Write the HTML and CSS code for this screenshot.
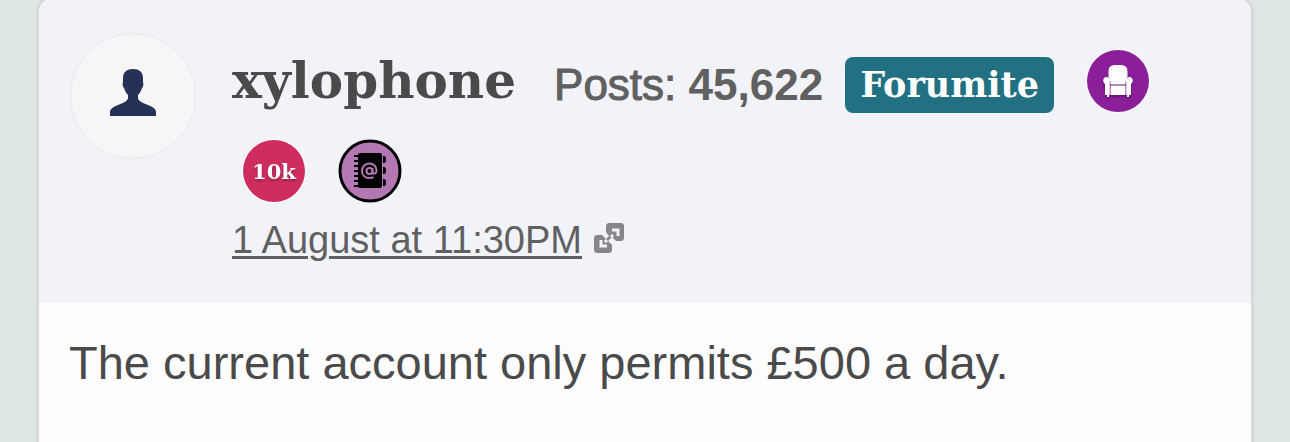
FILE: index.html
```
<!DOCTYPE html>
<html lang="en">

<head>
    <meta charset="UTF-8">
    <meta name="viewport" content="width=device-width, initial-scale=1.0">
    <title>Forum post</title>
    <link rel="stylesheet" href="styles.css">
</head>

<body>
    <article class="post">
        <header class="post-header">
            <a class="avatar" href="#profile" aria-label="xylophone's profile">
                <svg viewBox="0 0 48 48" aria-hidden="true">
                    <path d="M24 1c6 0 10 3 10 9v4c1 2 0 5-1 6-1 3-2 5-4 7v3c0 3 5 5 10 7 5 2 8 4 8 7v4H1v-4c0-3 3-5 8-7 5-2 10-4 10-7v-3c-2-2-3-4-4-7-1-1-2-4-1-6v-4c0-6 4-9 10-9z" fill="#263158"/>
                </svg>
            </a>
            <div class="details">
                <div class="author">
                    <a class="name" href="#profile">xylophone</a>
                    <span class="posts">Posts: <b>45,622</b></span>
                    <span class="rank">Forumite</span>
                    <svg class="badge" viewBox="0 0 64 64" role="img" aria-label="Armchair badge">
                        <circle cx="32" cy="32" r="32" fill="#fff"/>
                        <circle cx="32" cy="32" r="31" fill="#8a1f99"/>
                        <g class="raised" fill="#fff">
                            <path d="M22.500 28v-5c0-5 2-7 7-7h5c5 0 7 2 7 7v5c-1 1-2 3-2 7.500h-15c0-4.500-1-6.500-2-7.500z"/>
                            <path d="M24.500 36.500h15V46h-15z"/>
                            <path d="M20.500 28c3 0 4 2 3.300 5v13H19V35c-3-2-2-7 1.500-7z"/>
                            <path d="M43.500 28c-3 0-4 2-3.300 5v13H45V35c3-2 2-7-1.500-7z"/>
                            <path d="M21 46h2v2h-2zM41 46h2v2h-2z"/>
                        </g>
                    </svg>
                    <svg class="badge" viewBox="0 0 64 64" role="img" aria-label="10k badge">
                        <circle cx="32" cy="32" r="32" fill="#fff"/>
                        <circle cx="32" cy="32" r="31" fill="#cf2d60"/>
                        <text class="badge-text raised" x="32" y="40" text-anchor="middle">10k</text>
                    </svg>
                    <svg class="badge" viewBox="0 0 64 64" role="img" aria-label="Address book badge">
                        <circle cx="32" cy="32" r="30" fill="#b377b3" stroke="#000" stroke-width="3"/>
                        <rect x="20" y="14" width="24" height="35" rx="2"/>
                        <path d="M18 16v33" stroke="#000" stroke-width="4" stroke-dasharray="2 3"/>
                        <path d="M45 17h1q2 0 2 3.500t-2 3.500h-1zM45 28h1q2 0 2 3.500t-2 3.500h-1zM45 40h1q2 0 2 3.500t-2 3.500h-1z"/>
                        <g fill="none" stroke="#b377b3" stroke-width="2">
                            <circle cx="31.500" cy="32" r="3"/>
                            <path d="M34.500 29v4c0 3 4 2 4-1.500 0-4-3-7-7-7s-7.500 3-7.500 7.500 3.500 7 7.500 7c2 0 3 0 4-1"/>
                        </g>
                    </svg>
                </div>
                <div class="meta">
                    <a class="permalink" href="#post"><time>1 August at 11:30PM</time></a>
                    <svg class="link-icon" viewBox="0 0 30 30" aria-hidden="true">
                        <path fill="#868789" d="M14 0h14l2 2v14l-2 2h-6l-4-4-4 4 4 4v6l-2 2H2l-2-2V14l2-2h6l4 4 3-3-3-4V2z"/>
                        <path fill="none" stroke="#f2f3f9" stroke-width="3" d="M18 7h6v6M7 17v6h6M17 14l2-2M11 19l2-2"/>
                    </svg>
                </div>
            </div>
        </header>
        <div class="message">The current account only permits £500 a day.</div>
    </article>
</body>

</html>
```

FILE: styles.css
```
body {
    margin: 0;
    padding: 0 36px;
    font-family: "Liberation Sans", Arial, sans-serif;
    color: #4a4a4a;
    background-color: #dde6e4;
}

.post {
    margin-top: -4px;
    min-height: calc(100vh + 4px);
    box-sizing: border-box;
    border: 3px solid #d7d9d9;
    border-bottom: none;
    border-radius: 16px 16px 0 0;
    background-color: #fdfdfd;
    overflow: hidden;
}

.post-header {
    display: flex;
    gap: 36px;
    padding: 34px 31px 40px;
    background-color: #f2f3f9;
}

.avatar {
    display: flex;
    align-items: center;
    justify-content: center;
    flex: none;
    width: 126px;
    height: 126px;
    box-sizing: border-box;
    padding-bottom: 8px;
    border: 1px solid #e8e9ee;
    border-radius: 50%;
    background-color: #f6f6f6;
}

.avatar svg {
    width: 48px;
    height: 48px;
}

.details {
    flex: 1;
    padding-top: 16px;
}

.author {
    display: flex;
    flex-wrap: wrap;
    align-items: center;
    gap: 26px 22px;
}

.name {
    font-family: "DejaVu Serif", serif;
    font-size: 50px;
    font-weight: bold;
    line-height: 64px;
    color: #4a4a4a;
    text-decoration: none;
}

.posts,
.rank {
    margin-top: 8px;
    line-height: 56px;
}

.posts {
    margin-left: 16px;
    font-size: 44px;
    color: #606060;
    -webkit-text-stroke: 1px #606060;
}

.posts b {
    -webkit-text-stroke: 0;
}

.rank {
    padding: 0 15px;
    border-radius: 8px;
    font-family: "DejaVu Serif", serif;
    font-size: 35px;
    font-weight: bold;
    color: #fff;
    background-color: #217182;
}

.badge {
    width: 64px;
    height: 64px;
    margin-left: 10px;
}

.badge-text {
    font-family: "DejaVu Serif", serif;
    font-size: 21px;
    font-weight: bold;
    fill: #fff;
}

.raised {
    filter: drop-shadow(0 2px 1px rgba(0, 0, 0, 0.3));
}

.meta {
    display: flex;
    align-items: center;
    gap: 12px;
    margin-top: 14px;
}

.permalink {
    font-size: 38px;
    line-height: 46px;
    color: #606060;
    text-decoration-thickness: 3px;
    text-underline-offset: 3px;
}

.link-icon {
    width: 30px;
    height: 30px;
    margin-bottom: 4px;
}

.message {
    padding: 32px 30px;
    font-size: 47px;
    line-height: 56px;
}
```
